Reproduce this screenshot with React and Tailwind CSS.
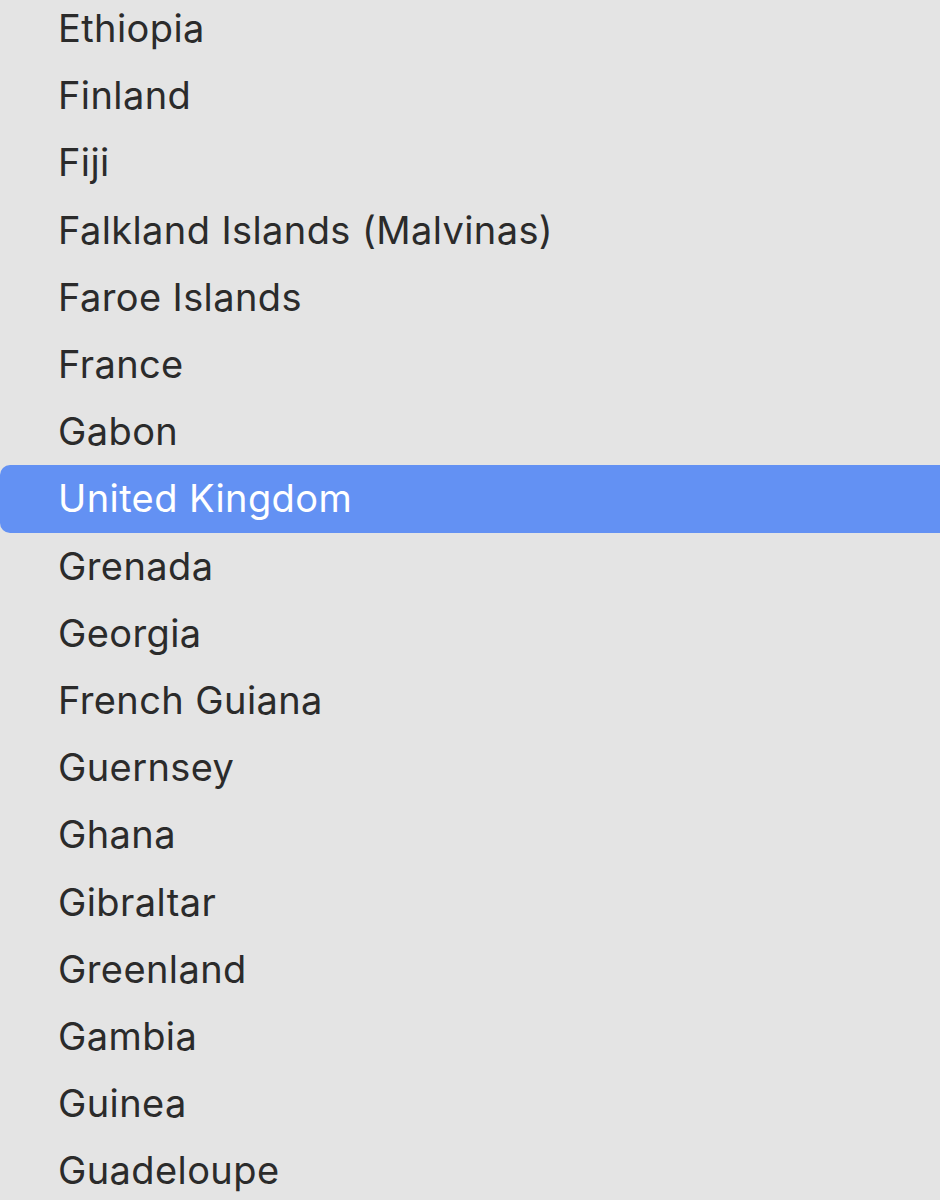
import React from 'react';

const countries = [
    'Ethiopia',
    'Finland',
    'Fiji',
    'Falkland Islands (Malvinas)',
    'Faroe Islands',
    'France',
    'Gabon',
    'United Kingdom',
    'Grenada',
    'Georgia',
    'French Guiana',
    'Guernsey',
    'Ghana',
    'Gibraltar',
    'Greenland',
    'Gambia',
    'Guinea',
    'Guadeloupe',
];

const App = () => {
    const selected = 'United Kingdom';

    return (
        <div className="w-[940px] h-[1200px] overflow-hidden bg-[#e4e4e4] font-['Inter','Noto_Sans',sans-serif]">
            <ul className="-mt-[5px] flex flex-col">
                {countries.map(name => (
                    <li
                        key={name}
                        className={
                            name === selected
                                ? 'h-[67.2px] flex items-center pl-[58px] bg-[#6391f3] text-white rounded-l-[10px] text-[38px] tracking-[0.4px]'
                                : 'h-[67.2px] flex items-center pl-[58px] text-[#2b2b2b] text-[38px] tracking-[0.4px]'
                        }
                    >
                        {name}
                    </li>
                ))}
            </ul>
        </div>
    );
};

export default App;
